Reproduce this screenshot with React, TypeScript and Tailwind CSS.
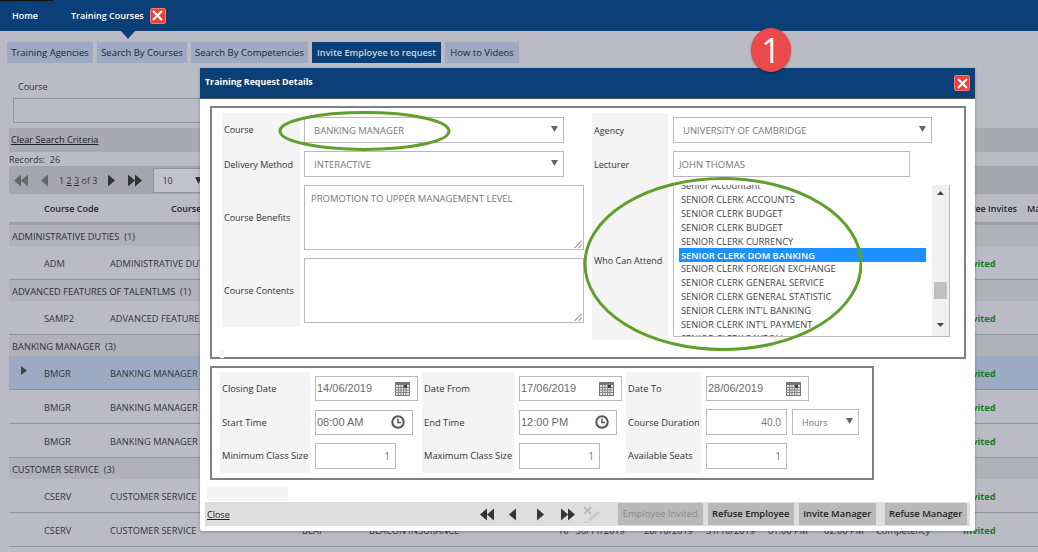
import type { ReactNode } from 'react';

const listItems = [
  'SENIOR CLERK ACCOUNTS',
  'SENIOR CLERK BUDGET',
  'SENIOR CLERK BUDGET',
  'SENIOR CLERK CURRENCY',
  'SENIOR CLERK DOM BANKING',
  'SENIOR CLERK FOREIGN EXCHANGE',
  'SENIOR CLERK GENERAL SERVICE',
  'SENIOR CLERK GENERAL STATISTIC',
  "SENIOR CLERK INT'L BANKING",
  "SENIOR CLERK INT'L PAYMENT",
  'SENIOR CLERK PAYROLL',
];

function CloseBox({ className }: { className: string }) {
  return (
    <div className={`flex items-center justify-center rounded-[2px] bg-[#ee3f38] border border-[#f47a74] ${className}`}>
      <svg viewBox="0 0 12 12" className="w-[11px] h-[11px]">
        <path d="M2 2 L10 10 M10 2 L2 10" stroke="#fff" strokeWidth="2.4" strokeLinecap="square" />
      </svg>
    </div>
  );
}

function Tab({ label, width, active }: { label: string; width: string; active?: boolean }) {
  return (
    <div
      className={`h-[21px] flex items-center justify-center whitespace-nowrap ${width} ${
        active ? 'bg-[#0a3f77] text-[#c9d6e6] text-[9.2px] font-semibold' : 'bg-[#9daac3] text-[9.5px] text-[#23262c]'
      }`}
    >
      {label}
    </div>
  );
}

function Triangles({ dir, count, color = '#666' }: { dir: 'l' | 'r'; count: 1 | 2; color?: string }) {
  const w = count === 2 ? 14 : 7;
  return (
    <svg width={w} height="13" viewBox={`0 0 ${w} 13`}>
      {dir === 'l' ? (
        <>
          <polygon points="7,0.5 7,12.5 0,6.5" fill={color} />
          {count === 2 && <polygon points="14,0.5 14,12.5 7,6.5" fill={color} />}
        </>
      ) : (
        <>
          <polygon points="0,0.5 0,12.5 7,6.5" fill={color} />
          {count === 2 && <polygon points="7,0.5 7,12.5 14,6.5" fill={color} />}
        </>
      )}
    </svg>
  );
}

function GroupRow({ label }: { label: string }) {
  return <div className="h-[21px] bg-[#b1b1bb] pl-[3px] pt-[2px] flex items-center text-[9.3px] whitespace-pre text-[#2f3036]">{label}</div>;
}

function DataRow({ code, name, selected, tail }: { code: string; name: string; selected?: boolean; tail?: boolean }) {
  return (
    <div
      className={`h-[34px] pt-[2px] flex items-center border-b border-[#92929c] text-[9.25px] text-[#33343a] whitespace-nowrap ${
        selected ? 'bg-[#9daac3]' : ''
      }`}
    >
      <div className="w-[35px] pl-[12px]">
        {selected && (
          <svg width="6" height="9" viewBox="0 0 6 9" className="-mt-[6px]">
            <polygon points="0,0 6,4.5 0,9" fill="#444" />
          </svg>
        )}
      </div>
      <div className="w-[66px]">{code}</div>
      <div className="w-[192px]">{name}</div>
      {tail ? (
        <>
          <div className="w-[67px]">BEAI</div>
          <div className="w-[189px]">BEACON INSURANCE</div>
          <div className="w-[86px]">10 &nbsp; 30/11/2019</div>
          <div className="w-[62px]">28/10/2019</div>
          <div className="w-[62px]">31/10/2019</div>
          <div className="w-[56px]">01:00 PM</div>
          <div className="w-[52px]">02:00 PM</div>
          <div className="w-[87px]">Competency</div>
        </>
      ) : (
        <div className="w-[661px]" />
      )}
      <div className="font-bold text-[#1a7a22]">Invited</div>
    </div>
  );
}

function SelectBox({ value, className }: { value: string; className: string }) {
  return (
    <div className={`h-[26px] flex items-center justify-between border border-[#b9b9b9] bg-white pl-[9px] pr-[5px] text-[#777] ${className}`}>
      <span className="pt-[1px]">{value}</span>
      <svg width="7" height="6" viewBox="0 0 7 6" className="-mt-[2px]">
        <polygon points="0,0 7,0 3.5,6" fill="#666" />
      </svg>
    </div>
  );
}

function TextArea({ value }: { value?: string }) {
  return (
    <div className="relative w-[280px] h-[65px] border border-[#b9b9b9] bg-white px-[6px] pt-[8px] text-[9.5px] text-[#777]">
      {value}
      <svg width="8" height="8" viewBox="0 0 8 8" className="absolute right-[1px] bottom-[1px]">
        <path d="M0.5 8 L8 0.5 M4.5 8 L8 4.5" stroke="#666" strokeWidth="1" />
      </svg>
    </div>
  );
}

function FormRow({ label, labelW, h, children }: { label: string; labelW: string; h: string; children: ReactNode }) {
  return (
    <div className={`flex ${h}`}>
      <div className={`${labelW} bg-[#f4f4f4] flex items-center pl-[2px] text-[#333]`}>{label}</div>
      <div className="pl-[4px] pt-[4px] text-[9.5px]">{children}</div>
    </div>
  );
}

function CalendarIcon() {
  return (
    <svg width="15" height="14" viewBox="0 0 15 14">
      <rect x="0" y="0" width="15" height="14" fill="#777" />
      <rect x="1" y="3" width="13" height="10" fill="#e4e4e4" />
      <path d="M1 5.5 H14 M1 8 H14 M1 10.5 H14 M3.5 3 V13 M6 3 V13 M8.5 3 V13 M11 3 V13" stroke="#888" strokeWidth="1" />
      <rect x="9" y="3" width="3" height="3" fill="#444" />
    </svg>
  );
}

function ClockIcon() {
  return (
    <svg width="14" height="14" viewBox="0 0 14 14">
      <circle cx="7" cy="7" r="5.7" fill="#fff" stroke="#555" strokeWidth="2" />
      <path d="M7 3.5 V7.5 H10" fill="none" stroke="#555" strokeWidth="1.5" />
    </svg>
  );
}

function DateInput({ value, icon, className }: { value: string; icon: ReactNode; className: string }) {
  return (
    <div className={`h-[25px] flex items-center justify-between border border-[#b9b9b9] bg-white pl-[1px] text-[11px] text-[#6a6a6a] font-['Liberation_Sans',sans-serif] ${className}`}>
      <span>{value}</span>
      {icon}
    </div>
  );
}

function NumInput({ value, className }: { value: string; className: string }) {
  return (
    <div className={`h-[26px] flex items-center justify-end border border-[#b9b9b9] bg-white pr-[5px] text-[10px] text-[#777] ${className}`}>
      {value}
    </div>
  );
}

function LowLabel({ text }: { text: string }) {
  return <div className="h-[33.67px] bg-[#f4f4f4] flex items-center pl-[2px] text-[9.35px] text-[#333]">{text}</div>;
}

function InputCell({ children }: { children: ReactNode }) {
  return <div className="h-[33.67px] flex items-center pl-[5px] gap-[5px]">{children}</div>;
}

function ActionButton({ label, className }: { label: string; className: string }) {
  return (
    <div className={`h-[22px] flex items-center justify-center bg-[#b9b9b9] text-[9.4px] font-semibold ${className}`}>{label}</div>
  );
}

export default function App() {
  return (
    <div className="relative w-[1038px] h-[552px] overflow-hidden bg-[#bbbbc5] text-[9px] leading-none font-['Open_Sans',sans-serif]">
      {/* top bar */}
      <div className="relative h-[31px] bg-[#0a3f77] flex items-center text-white font-semibold">
        <div className="absolute left-0 top-0 w-[53px] h-px bg-[#111]" />
        <span className="ml-[12px]">Home</span>
        <span className="ml-[33px]">Training Courses</span>
        <CloseBox className="ml-[6px] w-[16px] h-[16px]" />
        <div className="absolute left-[121px] top-[31px] w-0 h-0 border-x-[7px] border-x-transparent border-t-[8px] border-t-[#0a3f77]" />
      </div>

      {/* tabs */}
      <div className="flex gap-[4px] pl-[7px] pt-[11px]">
        <Tab label="Training Agencies" width="w-[86px]" />
        <Tab label="Search By Courses" width="w-[90px]" />
        <Tab label="Search By Competencies" width="w-[117px]" />
        <Tab label="Invite Employee to request" width="w-[129px]" active />
        <Tab label="How to Videos" width="w-[74px]" />
      </div>

      {/* search area behind the dialog */}
      <div className="pl-[18px] pt-[19px] text-[#33343a]">Course</div>
      <div className="ml-[13px] mt-[7px] h-[25px] w-[400px] border border-[#92929c]" />
      <div className="ml-[9px] mt-[5px] h-[24px] bg-[#a9a9b3] flex items-center pl-[2px] text-[9.2px] underline text-[#1f2026]">
        Clear Search Criteria
      </div>
      <div className="ml-[9px] h-[14px] flex items-center text-[#33343a]">Records:&nbsp; 26</div>
      <div className="ml-[9px] h-[28px] bg-[#a5a5af] flex items-center pl-[5px] text-[#33343a]">
        <Triangles dir="l" count={2} />
        <div className="ml-[13px]"><Triangles dir="l" count={1} /></div>
        <span className="ml-[11px]">1 <u>2</u> <u>3</u> of 3</span>
        <div className="ml-[11px]"><Triangles dir="r" count={1} color="#333" /></div>
        <div className="ml-[13px]"><Triangles dir="r" count={2} color="#333" /></div>
        <div className="ml-[11px] w-[120px] h-[25px] bg-[#c2c2ca] border border-[#92929c] flex items-center pl-[8px] gap-[22px]">
          10
          <svg width="7" height="7" viewBox="0 0 7 7"><polygon points="0,0 7,0 3.5,7" fill="#333" /></svg>
        </div>
      </div>

      {/* table behind the dialog */}
      <div className="ml-[9px]">
        <div className="h-[31px] border-b-[3px] border-[#9d9da7] flex items-center font-semibold text-[#26272c] whitespace-nowrap">
          <div className="w-[35px] shrink-0" />
          <div className="w-[127px] shrink-0">Course Code</div>
          <div className="w-[746px] shrink-0">Course</div>
          <div className="w-[100px] shrink-0 text-right">Employee Invites</div>
          <div className="ml-[10px] shrink-0">Manager Invites</div>
        </div>
        <GroupRow label="ADMINISTRATIVE DUTIES  (1)" />
        <DataRow code="ADM" name="ADMINISTRATIVE DUTIES" />
        <GroupRow label="ADVANCED FEATURES OF TALENTLMS  (1)" />
        <DataRow code="SAMP2" name="ADVANCED FEATURES" />
        <GroupRow label="BANKING MANAGER  (3)" />
        <DataRow code="BMGR" name="BANKING MANAGER" selected />
        <DataRow code="BMGR" name="BANKING MANAGER" />
        <DataRow code="BMGR" name="BANKING MANAGER" />
        <GroupRow label="CUSTOMER SERVICE  (3)" />
        <DataRow code="CSERV" name="CUSTOMER SERVICE" />
        <DataRow code="CSERV" name="CUSTOMER SERVICE" tail />
      </div>

      {/* dialog */}
      <div className="absolute left-[200px] top-[68px] w-[775px] h-[463px] bg-white shadow-[0_1px_3px_rgba(0,0,0,0.3)] rounded-b-[2px]">
        <div className="h-[31px] bg-[#0a3f77] border-b border-[#555] flex items-center justify-between px-[5px] text-[8.85px] text-white font-bold">
          <span className="-mt-[2px]">Training Request Details</span>
          <CloseBox className="w-[16px] h-[16px]" />
        </div>
        <div className="pl-[10px] pt-[7px]">
          <div className="w-[756px] h-[253px] border-2 border-[#808080] pl-[10px] pt-[5px] flex gap-[8px]">
            <div>
              <FormRow label="Course" labelW="w-[78px] pb-[1px]" h="h-[34px]">
                <SelectBox value="BANKING MANAGER" className="w-[260px]" />
              </FormRow>
              <FormRow label="Delivery Method" labelW="w-[78px]" h="h-[34px]">
                <SelectBox value="INTERACTIVE" className="w-[260px]" />
              </FormRow>
              <FormRow label="Course Benefits" labelW="w-[78px]" h="h-[73px]">
                <TextArea value="PROMOTION TO UPPER MANAGEMENT LEVEL" />
              </FormRow>
              <FormRow label="Course Contents" labelW="w-[78px]" h="h-[73px]">
                <TextArea />
              </FormRow>
              <div className="w-[4px] h-[9px] bg-[#f4f4f4] mt-[22px] -ml-[2px]" />
            </div>
            <div>
              <FormRow label="Agency" labelW="w-[76px]" h="h-[34px]">
                <div className="pl-[1px]"><SelectBox value="UNIVERSITY OF CAMBRIDGE" className="w-[259px]" /></div>
              </FormRow>
              <FormRow label="Lecturer" labelW="w-[76px]" h="h-[34px]">
                <div className="pl-[1px]">
                  <div className="w-[237px] h-[26px] border border-[#b9b9b9] flex items-center pl-[5px] pt-[1px] text-[#777]">JOHN THOMAS</div>
                </div>
              </FormRow>
              <FormRow label="Who Can Attend" labelW="w-[76px]" h="h-[159px]">
                <div className="ml-[1px] w-[277px] h-[152px] border-x border-b border-[#b9b9b9] flex overflow-hidden">
                  <div className="w-[259px] overflow-hidden pl-[5px] text-[9.3px] text-[#444]">
                    <div className="h-[8px] overflow-hidden pl-[2px] flex items-end leading-[14px]">Senior Accountant</div>
                    {listItems.map((item, i) => (
                      <div
                        key={i}
                        className={`h-[13.85px] w-[247px] pl-[2px] flex items-center shrink-0 ${
                          i === 4 ? 'bg-[#1e90ff] text-white font-semibold' : ''
                        }`}
                      >
                        {item}
                      </div>
                    ))}
                  </div>
                  <div className="w-[17px] bg-[#f0f0f0] flex flex-col items-center pt-[6px]">
                    <svg width="7" height="4" viewBox="0 0 7 4"><polygon points="0,4 7,4 3.5,0" fill="#444" /></svg>
                    <div className="w-[13px] h-[17px] bg-[#c0c0c0] mt-[87px]" />
                    <svg width="7" height="4" viewBox="0 0 7 4" className="mt-[24px]"><polygon points="0,0 7,0 3.5,4" fill="#444" /></svg>
                  </div>
                </div>
              </FormRow>
            </div>
          </div>

          <div className="mt-[7px] w-[664px] h-[114px] border-2 border-[#808080] pl-[8px] pt-[4px]">
            <div className="grid grid-cols-[90px_112px_92px_112px_75px_1fr]">
              <LowLabel text="Closing Date" />
              <InputCell><DateInput value="14/06/2019" icon={<div className="mr-[7px]"><CalendarIcon /></div>} className="w-[103px]" /></InputCell>
              <LowLabel text="Date From" />
              <InputCell><DateInput value="17/06/2019" icon={<div className="mr-[7px]"><CalendarIcon /></div>} className="w-[103px]" /></InputCell>
              <LowLabel text="Date To" />
              <InputCell><DateInput value="28/06/2019" icon={<div className="mr-[7px]"><CalendarIcon /></div>} className="w-[103px]" /></InputCell>

              <LowLabel text="Start Time" />
              <InputCell><DateInput value="08:00 AM" icon={<div className="mr-[7px]"><ClockIcon /></div>} className="w-[98px]" /></InputCell>
              <LowLabel text="End Time" />
              <InputCell><DateInput value="12:00 PM" icon={<div className="mr-[7px]"><ClockIcon /></div>} className="w-[98px]" /></InputCell>
              <LowLabel text="Course Duration" />
              <InputCell>
                <NumInput value="40.0" className="w-[81px]" />
                <SelectBox value="Hours" className="w-[67px]" />
              </InputCell>

              <LowLabel text="Minimum Class Size" />
              <InputCell><NumInput value="1" className="w-[81px]" /></InputCell>
              <LowLabel text="Maximum Class Size" />
              <InputCell><NumInput value="1" className="w-[81px]" /></InputCell>
              <LowLabel text="Available Seats" />
              <InputCell><NumInput value="1" className="w-[81px]" /></InputCell>
            </div>
          </div>
        </div>

        <div className="ml-[7px] mt-[6px] w-[81px] h-[15px] bg-[#f5f5f5]" />
        <div className="ml-[5px] mt-[1px] w-[765px] h-[24px] bg-[#dedede] flex items-center pl-[2px] text-[#222]">
          <span className="underline">Close</span>
          <div className="ml-[250px] flex items-center">
            <Triangles dir="l" count={2} color="#333" />
            <div className="ml-[15px]"><Triangles dir="l" count={1} color="#333" /></div>
            <div className="ml-[21px]"><Triangles dir="r" count={1} color="#333" /></div>
            <div className="ml-[17px]"><Triangles dir="r" count={2} color="#333" /></div>
            <svg width="19" height="17" viewBox="0 0 19 17" className="ml-[8px]">
              <path d="M1 1 L8 8 M8 1 L1 8" stroke="#bbb" strokeWidth="2" />
              <path d="M6 14 L16 6" stroke="#c8c8c8" strokeWidth="3" />
              <path d="M1 16 H6" stroke="#bbb" strokeWidth="1" strokeDasharray="1 1" />
            </svg>
          </div>
          <ActionButton label="Employee Invited" className="ml-[16px] w-[85px] text-[#8a8a8a] !font-normal" />
          <ActionButton label="Refuse Employee" className="ml-[5px] w-[86px] text-[#222]" />
          <ActionButton label="Invite Manager" className="ml-[5px] w-[77px] text-[#222]" />
          <ActionButton label="Refuse Manager" className="ml-[9px] w-[82px] text-[#222]" />
        </div>
      </div>

      {/* annotations */}
      <svg className="absolute left-[278px] top-[110px] pointer-events-none" width="173" height="42" viewBox="0 0 173 42">
        <ellipse cx="86.5" cy="21" rx="84.5" ry="18.5" fill="none" stroke="#5f9f2b" strokeWidth="3" />
      </svg>
      <svg className="absolute left-[583px] top-[177px] pointer-events-none" width="279" height="176" viewBox="0 0 279 176">
        <ellipse cx="140" cy="87" rx="138" ry="85.5" fill="none" stroke="#5f9f2b" strokeWidth="3" />
      </svg>
      <div className="absolute left-[751px] top-[28px] w-[40px] h-[44px] rounded-[50%] bg-[#ea4a4a] shadow-[0_1px_2px_rgba(0,0,0,0.4)] flex items-center justify-center text-white text-[34px] font-['Open_Sans',sans-serif]">
        1
      </div>
    </div>
  );
}
